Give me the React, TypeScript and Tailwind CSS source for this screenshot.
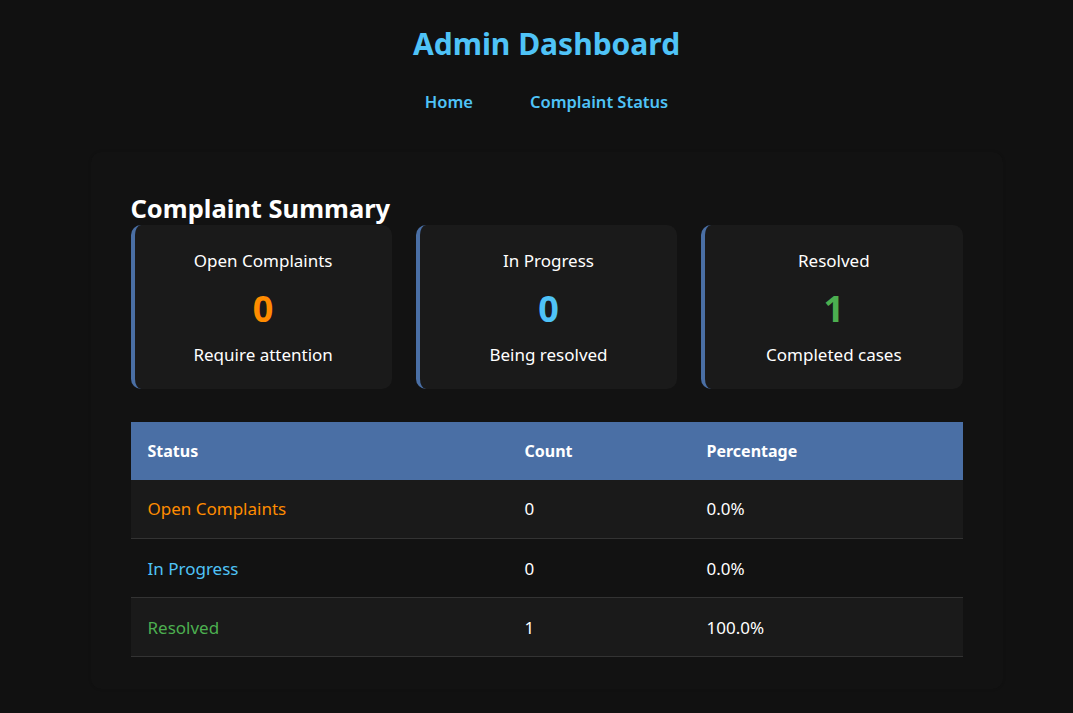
const cards = [
  { title: "Open Complaints", value: "0", note: "Require attention", color: "text-[#ff8c00]" },
  { title: "In Progress", value: "0", note: "Being resolved", color: "text-[#4fc3f7]" },
  { title: "Resolved", value: "1", note: "Completed cases", color: "text-[#4caf50]" },
];

const rows = [
  { status: "Open Complaints", count: 0, pct: "0.0%", color: "text-[#ff8c00]", bg: "bg-[#1a1a1a]" },
  { status: "In Progress", count: 0, pct: "0.0%", color: "text-[#4fc3f7]", bg: "bg-transparent" },
  { status: "Resolved", count: 1, pct: "100.0%", color: "text-[#4caf50]", bg: "bg-[#1a1a1a]" },
];

export default function App() {
  return (
    <div className="min-h-[713px] bg-[#111111] pl-[20px] text-white font-['Noto_Sans',sans-serif]">
      <header className="pt-[25px] text-center">
        <h1 className="text-[30px] leading-[38px] font-bold text-[#4fc3f7]">Admin Dashboard</h1>
        <nav className="mt-[27px] flex justify-center gap-[57px] text-[16.5px] font-semibold text-[#4fc3f7]">
          <a href="#">Home</a>
          <a href="#">Complaint Status</a>
        </nav>
      </header>

      <main className="mx-auto mt-[37px] w-[912px] rounded-[10px] bg-[#121212] px-[40px] pt-[40px] pb-[32px] shadow-[0_0_3px_rgba(0,0,0,0.15)]">
        <h2 className="text-[25.5px] leading-[32px] font-bold">Complaint Summary</h2>
        <div className="mt-[1px] grid grid-cols-3 gap-[24px]">
          {cards.map((c) => (
            <div
              key={c.title}
              className="flex h-[164px] flex-col items-center rounded-[10px] border-l-4 border-[#4a6fa5] bg-[#1a1a1a] pt-[24px] text-center"
            >
              <div className="text-[17px] leading-[24px]">{c.title}</div>
              <div className={`mt-[14px] text-[36px] leading-[44px] font-bold ${c.color}`}>{c.value}</div>
              <div className="mt-[12px] text-[17px] leading-[24px]">{c.note}</div>
            </div>
          ))}
        </div>

        <table className="mt-[33px] w-full border-collapse text-left text-[17px]">
          <thead>
            <tr className="bg-[#4a6fa5]">
              <th className="w-[377px] px-[17px] h-[58px] text-[16px] font-bold">Status</th>
              <th className="w-[182px] px-[17px] h-[58px] text-[16px] font-bold">Count</th>
              <th className="px-[17px] h-[58px] text-[16px] font-bold">Percentage</th>
            </tr>
          </thead>
          <tbody>
            {rows.map((r) => (
              <tr key={r.status} className={`${r.bg} border-b border-[#333333]`}>
                <td className={`px-[17px] h-[59px] ${r.color}`}>{r.status}</td>
                <td className="px-[17px] h-[59px]">{r.count}</td>
                <td className="px-[17px] h-[59px]">{r.pct}</td>
              </tr>
            ))}
          </tbody>
        </table>
      </main>
    </div>
  );
}
